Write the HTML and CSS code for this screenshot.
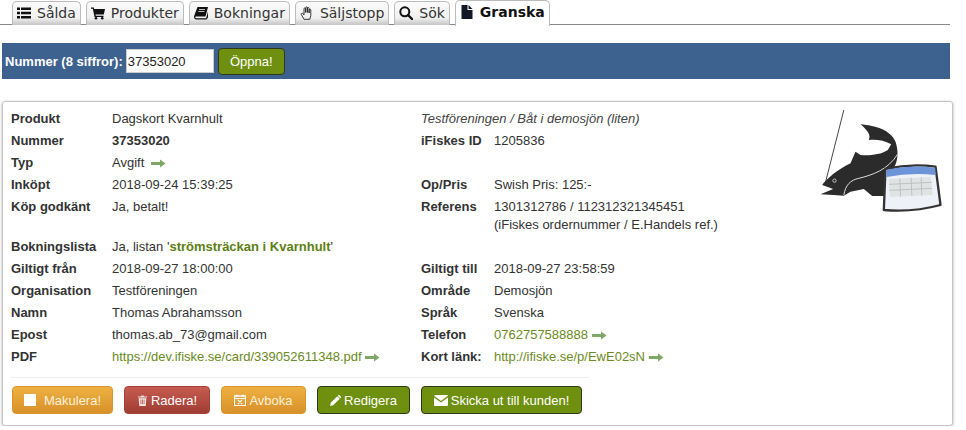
FILE: index.html
```html
<!doctype html>
<html lang="sv">
	<head>
		<meta charset="utf-8" />
		<title>Granska</title>
		<link rel="stylesheet" href="styles.css">
	</head>
	<body>
		<svg class="defs" width="0" height="0">
			<symbol id="arrow" viewBox="0 0 15 9">
				<path d="M0 3h9V0.500L14.500 4.500 9 8.500V6H0z" fill="#7fa866"/>
			</symbol>
		</svg>

		<nav class="tabs">
			<a class="tab">
				<svg class="tab-icon" viewBox="0 0 14 14"><path d="M0 1.500h3v2.400H0zM4 1.500h10v2.400H4zM0 5.800h3v2.400H0zM4 5.800h10v2.400H4zM0 10.100h3v2.400H0zM4 10.100h10v2.400H4z" fill="#111"/></svg>
				Sålda
			</a>
			<a class="tab">
				<svg class="tab-icon" viewBox="0 0 14 14"><path d="M0 1.500h2.800l.4 1.500H14l-1.200 5.500H4.500l.3 1.300H12.500v1.200H3.500L1.800 2.700H0z" fill="#111"/><circle cx="5" cy="12.300" r="1.300" fill="#111"/><circle cx="11.200" cy="12.300" r="1.300" fill="#111"/></svg>
				Produkter
			</a>
			<a class="tab">
				<svg class="tab-icon" viewBox="0 0 14 14"><path d="M3.500 1H14l-2.500 9.500H2.200c-.8 0-1 .5-.9 1 .1.400.5.700 1 .7h9.900L14 5.500v6L12.500 13.500H2.500C1 13.500 0 12.300 0 11c0-.6.200-1 .4-1.700z" fill="#111"/><path d="M5 3.500h6M4.400 5.500h6" stroke="#eee" stroke-width=".8"/></svg>
				Bokningar
			</a>
			<a class="tab">
				<svg class="tab-icon" viewBox="0 0 14 14"><path d="M4 13.300 1.300 8.500c-.5-1 .8-1.800 1.500-1L4 9V2.800c0-1.200 1.600-1.200 1.700 0V6.500 1.800c0-1.200 1.700-1.200 1.700 0V6.500 2.400c0-1.200 1.700-1.200 1.700 0V7 4c0-1.200 1.700-1.200 1.700 0v5.500l-1 3.800z" fill="none" stroke="#222" stroke-width=".9" stroke-linejoin="round"/></svg>
				Säljstopp
			</a>
			<a class="tab">
				<svg class="tab-icon" viewBox="0 0 14 14"><circle cx="5.800" cy="5.800" r="4.500" fill="none" stroke="#111" stroke-width="2"/><path d="M9 9l4 4" stroke="#111" stroke-width="2.400" stroke-linecap="round"/></svg>
				Sök
			</a>
			<a class="tab active">
				<svg class="tab-icon" viewBox="0 0 14 14"><path d="M1.500 0H7.500V5h5v9h-11zM8.500 0l4 4h-4z" fill="#111827"/></svg>
				Granska
			</a>
		</nav>

		<form class="open-bar">
			<label>Nummer (8 siffror):</label>
			<input value="37353020" />
			<button type="button" class="btn green">Öppna!</button>
		</form>

		<section class="card">
			<svg class="logo" viewBox="50 30 380 330">
				<path d="M130 45 75 262" stroke="#222" stroke-width="2.500"/>
				<path d="M180 88C225 92 270 105 285 140 295 170 292 195 282 215L250 303 215 303 190 282 150 290 130 302 100 300 60 298 98 282 65 270C80 250 110 225 150 205L165 170 180 180C205 182 240 180 262 165L272 148C250 135 225 132 205 135 212 120 200 105 180 88Z" fill="#2b2b2b"/>
				<path d="M130 300C135 270 150 255 175 250 215 240 262 225 291 178" stroke="#fff" stroke-width="2.500" fill="none"/>
				<circle cx="102" cy="257" r="5" fill="none" stroke="#fff" stroke-width="2"/>
				<path d="M255 222Q330 205 405 215L420 330Q340 352 250 345Z" fill="#eef2f8" stroke="#333" stroke-width="7" stroke-linejoin="round"/>
				<path d="M258 224Q330 208 404 218L406 240Q330 232 258 246Z" fill="#6d93d8"/>
				<path d="M265 252 392 246 396 300 268 306Z" fill="#dfe3e3"/>
				<path d="M266 268 394 262M267 286 395 280M298 250 300 305M332 248 334 303M362 247 364 302" stroke="#bbb" stroke-width="2.500"/>
			</svg>

			<table class="info">
				<tr>
					<th>Produkt</th><td>Dagskort Kvarnhult</td>
					<td colspan="2"><em class="org">Testföreningen / Båt i demosjön (liten)</em></td>
				</tr>
				<tr>
					<th>Nummer</th><td><b>37353020</b></td>
					<th>iFiskes ID</th><td>1205836</td>
				</tr>
				<tr>
					<th>Typ</th><td colspan="3">Avgift <svg class="arrow spaced"><use href="#arrow"/></svg></td>
				</tr>
				<tr>
					<th>Inköpt</th><td>2018-09-24 15:39:25</td>
					<th>Op/Pris</th><td>Swish Pris: 125:-</td>
				</tr>
				<tr class="tall">
					<th>Köp godkänt</th><td>Ja, betalt!</td>
					<th>Referens</th><td class="ref-lines">1301312786 / 112312321345451<br>(iFiskes ordernummer / E.Handels ref.)</td>
				</tr>
				<tr>
					<th>Bokningslista</th><td colspan="3">Ja, listan '<a class="list-link">strömsträckan i Kvarnhult</a>'</td>
				</tr>
				<tr>
					<th>Giltigt från</th><td>2018-09-27 18:00:00</td>
					<th>Giltigt till</th><td>2018-09-27 23:58:59</td>
				</tr>
				<tr>
					<th>Organisation</th><td>Testföreningen</td>
					<th>Område</th><td>Demosjön</td>
				</tr>
				<tr>
					<th>Namn</th><td>Thomas Abrahamsson</td>
					<th>Språk</th><td>Svenska</td>
				</tr>
				<tr>
					<th>Epost</th><td>thomas.ab_73@gmail.com</td>
					<th>Telefon</th><td><a class="link">0762757588888</a> <svg class="arrow"><use href="#arrow"/></svg></td>
				</tr>
				<tr>
					<th>PDF</th><td><a class="link">https://dev.ifiske.se/card/339052611348.pdf</a> <svg class="arrow"><use href="#arrow"/></svg></td>
					<th>Kort länk:</th><td><a class="link">http://ifiske.se/p/EwE02sN</a> <svg class="arrow"><use href="#arrow"/></svg></td>
				</tr>
			</table>

			<hr class="divider" />

			<div class="actions">
				<button class="btn orange makulera">
					<svg class="btn-icon" viewBox="0 0 12 12"><rect width="12" height="12" fill="#fff"/></svg>
					Makulera!
				</button>
				<button class="btn red radera">
					<svg class="btn-icon small" viewBox="0 0 12 12"><path d="M4 1.500 5 .5h2l1 1h3v1.200H1V1.500zM1.800 3.500h8.400L9.500 12h-7z" fill="#f6e6e4"/><path d="M4.300 5v5M6 5v5M7.700 5v5" stroke="#b5483f" stroke-width=".8"/></svg>
					Radera!
				</button>
				<button class="btn orange avboka">
					<svg class="btn-icon" viewBox="0 0 12 12"><path d="M.5 2h11v9.500H.500zM3 .5v2.500M9 .5v2.500" fill="none" stroke="#fff" stroke-width="1.200"/><path d="M.5 2h11v2.500H.500zM4 6l4 4M8 6l-4 4" fill="none" stroke="#fff" stroke-width="1.200"/></svg>
					Avboka
				</button>
				<button class="btn green redigera">
					<svg class="btn-icon small" viewBox="0 0 12 12"><path d="M0 12l.8-3.500L8 1.300l2.700 2.700-7.200 7.200zM9 .3c.4-.4 1-.4 1.400 0l1.300 1.300c.4.400.4 1 0 1.400l-.5.500L8.500.8z" fill="#fff"/></svg>
					Redigera
				</button>
				<button class="btn green skicka">
					<svg class="btn-icon wide" viewBox="0 0 14 11"><path d="M0 .8C0 .3.400 0 1 0h12c.6 0 1 .3 1 .8L7 6 0 .8zM0 2.500 7 7.500l7-5V10c0 .6-.4 1-1 1H1c-.6 0-1-.4-1-1z" fill="#fff"/></svg>
					Skicka ut till kunden!
				</button>
			</div>
		</section>
	</body>
</html>
```

FILE: styles.css
```css
/* globalt */

body {
	margin: 0;
	font-size: 13px;
	font-family: "Liberation Sans", Arial, sans-serif;
	color: #333;
	background: white;
}

.defs {
	position: absolute;
}

/* flikar */

.tabs {
	display: flex;
	gap: 5px;
	height: 24px;
	width: 938px;
	padding-left: 12px;
	border-bottom: 1px solid #888;
	font-family: "DejaVu Sans", Verdana, sans-serif;
	font-size: 14px;
}

.tab {
	display: flex;
	align-items: center;
	gap: 6px;
	box-sizing: border-box;
	height: 24px;
	margin-top: 1px;
	padding: 0 4px 2px 4px;
	border: 1px solid #bbb;
	border-bottom: 0;
	border-radius: 5px 5px 0 0;
	background: linear-gradient(#fbfbfb, #f0f0f0 70%, #c4c4c4);
	color: #333;
}

.tab-icon {
	width: 14px;
	height: 14px;
	flex: none;
}

.tab.active {
	height: 26px;
	margin-top: 0;
	background: white;
	font-weight: bold;
	color: #111;
	padding-bottom: 3px;
	position: relative;
}

/* nummer-rad */

.open-bar {
	display: flex;
	align-items: center;
	box-sizing: border-box;
	height: 36px;
	width: 948px;
	margin: 18px 0 22px 2px;
	padding-left: 3px;
	background: #3e6290;
	color: white;
	font-size: 13px;
}

.open-bar label {
	font-weight: bold;
	margin-right: 3px;
}

.open-bar input {
	box-sizing: border-box;
	width: 88px;
	height: 24px;
	border: 1px solid #ccc;
	padding: 0 1px;
	margin-right: 4px;
	font: 13px "Liberation Sans", Arial, sans-serif;
	color: #222;
}

/* knappar */

.btn {
	display: inline-flex;
	align-items: center;
	justify-content: center;
	gap: 3px;
	box-sizing: border-box;
	height: 28px;
	padding: 0;
	border: 1px solid #2f3a1c;
	border-radius: 4px;
	font: 13px "Liberation Sans", Arial, sans-serif;
	color: white;
}

.btn.green {
	background: #6f8f0f;
}

.btn.orange {
	border-color: #d9962c;
	background: linear-gradient(#eeb042, #d8912a);
	color: #fdf0d8;
}

.btn.red {
	border-color: #a5433a;
	background: linear-gradient(#c75b50, #9f3d33);
}

.open-bar .btn {
	width: 67px;
	height: 27px;
}

.btn-icon {
	width: 12px;
	height: 12px;
	flex: none;
}

.btn-icon.small {
	width: 11px;
	height: 11px;
}

.btn-icon.wide {
	width: 14px;
	height: 11px;
}

.makulera {
	gap: 8px;
	width: 101px;
}

.radera {
	width: 86px;
}

.avboka {
	width: 85px;
}

.redigera {
	width: 93px;
}

.skicka {
	width: 161px;
}

/* kortet */

.card {
	position: relative;
	box-sizing: border-box;
	width: 951px;
	height: 325px;
	margin-left: 2px;
	padding: 6px 8px;
	border: 1px solid #c4c4c4;
	border-radius: 3px;
	box-shadow: 0 1px 3px rgba(60, 70, 90, 0.45);
}

.logo {
	position: absolute;
	top: 3px;
	left: 814px;
	width: 127px;
	height: 110px;
}

.info {
	border-collapse: collapse;
	font-size: 13px;
	line-height: 14px;
}

.info tr {
	height: 22px;
}

.info tr.tall {
	height: 40px;
}

.info th,
.info td {
	padding: 4px 0 0 0;
	vertical-align: top;
	text-align: left;
	white-space: nowrap;
}

.info td.ref-lines {
	padding-top: 2px;
	line-height: 18px;
}

.info th {
	font-weight: bold;
	color: #333;
}

.info th:first-child {
	width: 101px;
}

.info td:nth-child(2) {
	width: 309px;
}

.info th:nth-child(3) {
	width: 73px;
}

.org {
	color: #444;
}

.link {
	color: #6b8a22;
}

.list-link {
	color: #5c7f14;
	font-weight: bold;
}

.arrow {
	width: 15px;
	height: 9px;
	vertical-align: -1px;
}

.arrow.spaced {
	margin-left: 3px;
}

.divider {
	width: 578px;
	height: 0;
	margin: 9px 0 8px 0;
	border: 0;
	border-top: 1px solid #eee;
}

.actions {
	display: flex;
	gap: 11px;
	margin-left: 1px;
}
```
